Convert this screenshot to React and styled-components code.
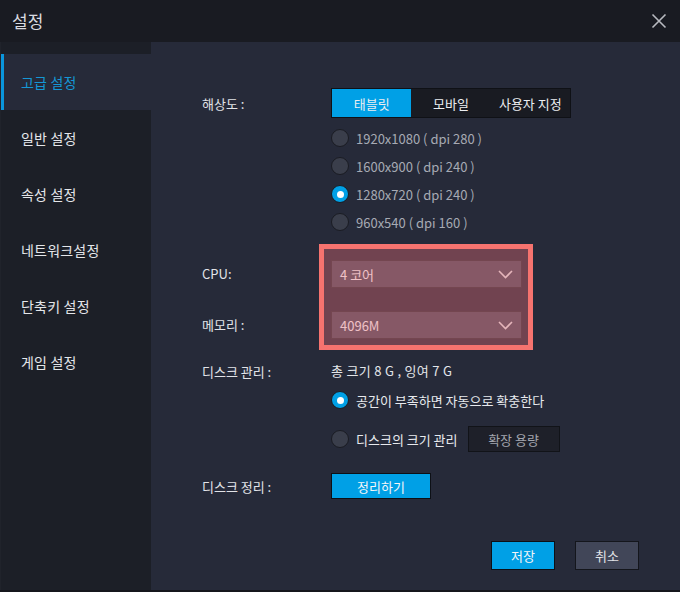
import React, { useState } from "react";
import styled, { createGlobalStyle } from "styled-components";

const GlobalStyle = createGlobalStyle`
  html, body {
    margin: 0;
    padding: 0;
    background: #191b22;
  }
  * {
    box-sizing: border-box;
  }
  body {
    font-family: "Noto Sans CJK KR", "Noto Sans", sans-serif;
  }
`;

const menus = ["고급 설정", "일반 설정", "속성 설정", "네트워크설정", "단축키 설정", "게임 설정"];
const resolutions = [
  "1920x1080 ( dpi 280 )",
  "1600x900 ( dpi 240 )",
  "1280x720 ( dpi 240 )",
  "960x540 ( dpi 160 )",
];
const tabs = ["태블릿", "모바일", "사용자 지정"];

const ChevronIcon = () => (
  <svg width="15" height="9" viewBox="0 0 15 9">
    <path d="M1 1l6.5 6.5L14 1" fill="none" stroke="currentColor" strokeWidth="1.6" />
  </svg>
);

const CloseIcon = () => (
  <svg width="16" height="16" viewBox="0 0 16 16">
    <path d="M1.5 1.5l13 13M14.5 1.5l-13 13" stroke="currentColor" strokeWidth="1.6" />
  </svg>
);

const App = () => {
  const [tab, setTab] = useState(0);
  const [res, setRes] = useState(2);
  const [disk, setDisk] = useState(0);

  return (
    <>
      <GlobalStyle />
      <Window>
        <Header>
          <Title>설정</Title>
          <CloseButton>
            <CloseIcon />
          </CloseButton>
        </Header>
        <Body>
          <Sidebar>
            {menus.map((m, i) => (
              <MenuItem key={m} $active={i === 0}>
                {m}
              </MenuItem>
            ))}
          </Sidebar>
          <Panel>
            <Row>
              <Label>해상도 :</Label>
              <Segmented>
                {tabs.map((t, i) => (
                  <Tab key={t} $active={tab === i} onClick={() => setTab(i)}>
                    {t}
                  </Tab>
                ))}
              </Segmented>
            </Row>
            <RadioList>
              {resolutions.map((r, i) => (
                <RadioRow key={r} onClick={() => setRes(i)}>
                  <Radio $checked={res === i} />
                  <RadioText $muted>{r}</RadioText>
                </RadioRow>
              ))}
            </RadioList>

            <SelectGroup>
              <Row>
                <Label $offset={-2}>CPU:</Label>
                <Select>
                  <span>4 코어</span>
                  <ChevronIcon />
                </Select>
              </Row>
              <Row $gap={23}>
                <Label $offset={-1}>메모리 :</Label>
                <Select>
                  <span>4096M</span>
                  <ChevronIcon />
                </Select>
              </Row>
              <Highlight />
            </SelectGroup>

            <Row $gap={22}>
              <Label>디스크 관리 :</Label>
              <Value>총 크기 8 G , 잉여 7 G</Value>
            </Row>
            <Row $gap={5}>
              <span />
              <RadioRow onClick={() => setDisk(0)}>
                <Radio $checked={disk === 0} />
                <RadioText>공간이 부족하면 자동으로 확충한다</RadioText>
              </RadioRow>
            </Row>
            <Row $gap={11}>
              <span />
              <InlineGroup>
                <RadioRow onClick={() => setDisk(1)}>
                  <Radio $checked={disk === 1} />
                  <RadioText>디스크의 크기 관리</RadioText>
                </RadioRow>
                <GhostButton>확장 용량</GhostButton>
              </InlineGroup>
            </Row>
            <Row $gap={20}>
              <Label>디스크 정리 :</Label>
              <PrimaryButton $width={100}>정리하기</PrimaryButton>
            </Row>

            <Footer>
              <PrimaryButton $width={64} $height={29}>
                저장
              </PrimaryButton>
              <CancelButton>취소</CancelButton>
            </Footer>
          </Panel>
        </Body>
      </Window>
    </>
  );
};

export default App;

const Window = styled.div`
  width: 680px;
  height: 592px;
  display: flex;
  flex-direction: column;
  background: #191b22;
  border-bottom: 2px solid #15171c;
  overflow: hidden;
`;

const Header = styled.div`
  height: 42px;
  flex-shrink: 0;
  display: flex;
  align-items: center;
  justify-content: space-between;
  padding: 0 13px 0 12px;
  background: #191b22;
`;

const Title = styled.div`
  color: #d9dbe0;
  font-size: 17px;
  line-height: 1;
  margin-top: -1px;
`;

const CloseButton = styled.div`
  color: #b8bac0;
  display: flex;
  margin-top: -1px;
`;

const Body = styled.div`
  flex: 1;
  display: flex;
  min-height: 0;
`;

const Sidebar = styled.div`
  width: 151px;
  flex-shrink: 0;
  padding-top: 12px;
  background: #1c1f27;
  border-left: 1px solid #20232b;
`;

const MenuItem = styled.div`
  height: 56px;
  display: flex;
  align-items: center;
  padding-left: 17px;
  font-size: 14px;
  letter-spacing: 0.2px;
  color: ${({ $active }) => ($active ? "#1597d6" : "#e4e6ea")};
  background: ${({ $active }) => ($active ? "#262a39" : "transparent")};
  border-left: 3px solid ${({ $active }) => ($active ? "#0a96dc" : "transparent")};
`;

const Panel = styled.div`
  flex: 1;
  display: flex;
  flex-direction: column;
  padding: 46px 41px 20px 51px;
  background: #262a39;
`;

const Row = styled.div`
  display: grid;
  grid-template-columns: 129px auto;
  align-items: center;
  justify-items: start;
  margin-top: ${({ $gap }) => $gap || 0}px;
`;

const Label = styled.div`
  font-size: 13px;
  color: #e1e3e8;
  white-space: nowrap;
  margin-top: ${({ $offset }) => $offset || 0}px;
`;

const Value = styled.div`
  font-size: 13px;
  color: #e4e6ea;
  line-height: 20px;
  letter-spacing: 0.3px;
`;

const Segmented = styled.div`
  display: flex;
  width: 240px;
  height: 30px;
  border: 1px solid #0f1116;
  background: #191b22;
`;

const Tab = styled.div`
  flex: 1;
  display: flex;
  align-items: center;
  justify-content: center;
  font-size: 13px;
  color: #eceef1;
  background: ${({ $active }) => ($active ? "#00a0e6" : "transparent")};
  cursor: pointer;
`;

const RadioList = styled.div`
  display: flex;
  flex-direction: column;
  margin: 6px 0 0 129px;
`;

const RadioRow = styled.div`
  height: 28px;
  display: flex;
  align-items: center;
  gap: 7px;
  cursor: pointer;
`;

const Radio = styled.span`
  width: 18px;
  height: 18px;
  border-radius: 50%;
  flex-shrink: 0;
  display: flex;
  align-items: center;
  justify-content: center;
  background: ${({ $checked }) => ($checked ? "#00a0e6" : "#3a3e4b")};
  border: 1px solid #1a1c23;

  &::after {
    content: "";
    width: 7px;
    height: 7px;
    border-radius: 50%;
    background: #ffffff;
    display: ${({ $checked }) => ($checked ? "block" : "none")};
  }
`;

const RadioText = styled.span`
  font-size: 13px;
  color: ${({ $muted }) => ($muted ? "#a7aab4" : "#e8eaee")};
  white-space: nowrap;
`;

const SelectGroup = styled.div`
  position: relative;
  margin-top: 24px;
`;

const Select = styled.div`
  width: 191px;
  height: 28px;
  display: flex;
  align-items: center;
  justify-content: space-between;
  padding: 0 8px 0 8px;
  background: #454b5b;
  border: 1px solid #2a2e3a;
  font-size: 13px;
  color: #e9eaee;

  svg {
    color: #d8d9dd;
  }
`;

const Highlight = styled.div`
  position: absolute;
  left: 117px;
  top: -16px;
  width: 214px;
  height: 106px;
  border: 5px solid #f6736f;
  background: rgba(255, 116, 122, 0.35);
  pointer-events: none;
`;

const InlineGroup = styled.div`
  display: flex;
  align-items: center;
  gap: 10px;
`;

const GhostButton = styled.div`
  width: 92px;
  height: 26px;
  display: flex;
  align-items: center;
  justify-content: center;
  background: #1e2029;
  border: 1px solid #111318;
  font-size: 13px;
  color: #a3a6af;
`;

const PrimaryButton = styled.div`
  width: ${({ $width }) => $width}px;
  height: ${({ $height }) => $height || 26}px;
  display: flex;
  align-items: center;
  justify-content: center;
  background: #00a0e6;
  border: 1px solid #0d1016;
  font-size: 13px;
  color: #f4f6f8;
  cursor: pointer;
`;

const CancelButton = styled.div`
  width: 64px;
  height: 29px;
  display: flex;
  align-items: center;
  justify-content: center;
  background: #414658;
  border: 1px solid #14161c;
  font-size: 13px;
  color: #e2e4e8;
  cursor: pointer;
`;

const Footer = styled.div`
  margin-top: auto;
  display: flex;
  justify-content: flex-end;
  gap: 20px;
`;
